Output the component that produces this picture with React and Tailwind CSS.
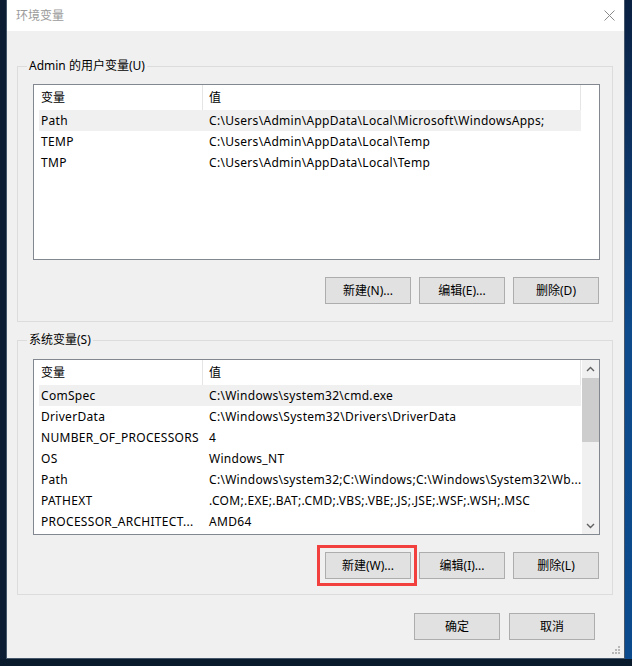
import React from 'react';

const userVars = [
  { name: 'Path', value: 'C:\\Users\\Admin\\AppData\\Local\\Microsoft\\WindowsApps;', selected: true },
  { name: 'TEMP', value: 'C:\\Users\\Admin\\AppData\\Local\\Temp' },
  { name: 'TMP', value: 'C:\\Users\\Admin\\AppData\\Local\\Temp' },
];

const systemVars = [
  { name: 'ComSpec', value: 'C:\\Windows\\system32\\cmd.exe', selected: true },
  { name: 'DriverData', value: 'C:\\Windows\\System32\\Drivers\\DriverData' },
  { name: 'NUMBER_OF_PROCESSORS', value: '4' },
  { name: 'OS', value: 'Windows_NT' },
  { name: 'Path', value: 'C:\\Windows\\system32;C:\\Windows;C:\\Windows\\System32\\Wb...' },
  { name: 'PATHEXT', value: '.COM;.EXE;.BAT;.CMD;.VBS;.VBE;.JS;.JSE;.WSF;.WSH;.MSC' },
  { name: 'PROCESSOR_ARCHITECT...', value: 'AMD64' },
];

function Chevron({ up }) {
  return (
    <svg width="9" height="6" viewBox="0 0 9 6">
      <polyline
        points={up ? '1,5 4.5,1.5 8,5' : '1,1 4.5,4.5 8,1'}
        fill="none"
        stroke="#606060"
        strokeWidth="1.4"
      />
    </svg>
  );
}

function Scrollbar() {
  return (
    <div className="ml-[1px] w-[17px] flex flex-col bg-[#f0f0f0]">
      <div className="h-[17px] flex items-center justify-center">
        <Chevron up />
      </div>
      <div className="h-[64px] mt-[1px] bg-[#cdcdcd]" />
      <div className="flex-1" />
      <div className="h-[17px] flex items-center justify-center">
        <Chevron />
      </div>
    </div>
  );
}

function VarList({ rows, scroll }) {
  return (
    <div className="ml-[15px] w-[567px] h-[176px] border border-[#828790] bg-white flex overflow-hidden">
      <div className="w-[547px] pl-[5px] flex flex-col">
        <div className="h-[25px] flex shrink-0">
          <div className="w-[164px] pl-[2px] flex items-center border-r border-[#e5e5e5]">变量</div>
          <div className="flex-1 pl-[6px] flex items-center border-r border-[#e5e5e5]">值</div>
        </div>
        {rows.map((r) => (
          <div
            key={r.name}
            className={`h-[21px] flex shrink-0 items-center whitespace-nowrap tracking-[0.3px] ${r.selected ? 'bg-[#f0f0f0]' : ''}`}
          >
            <div className="w-[164px] pl-[2px] overflow-hidden">{r.name}</div>
            <div className="flex-1 pl-[6px] overflow-hidden">{r.value}</div>
          </div>
        ))}
      </div>
      {scroll ? <Scrollbar /> : null}
    </div>
  );
}

function Button({ children }) {
  return (
    <div className="w-[86px] h-[27px] bg-[#e1e1e1] border border-[#adadad] flex items-center justify-center">
      {children}
    </div>
  );
}

function App() {
  return (
    <div className="w-[632px] h-[666px] flex flex-col bg-[#0a1a2d] overflow-hidden text-[12px] text-black font-['Noto_Sans','Noto_Sans_CJK_SC',sans-serif]">
      <div className="flex h-[659px]">
        <div className="w-[6px] bg-[#0b1c33]" />
        <div className="w-[619px] flex flex-col border-x border-b border-[#46566a]">
          {/* title bar */}
          <div className="h-[31px] bg-white flex items-center justify-between pl-[9px] pr-[9px]">
            <span className="text-[#9a9a9a]">环境变量</span>
            <svg width="11" height="11" viewBox="0 0 11 11">
              <path d="M0.5 0.5 L10.5 10.5 M10.5 0.5 L0.5 10.5" stroke="#8a8a8a" strokeWidth="1" />
            </svg>
          </div>

          <div className="relative flex-1 bg-[#f0f0f0] flex flex-col">
            <fieldset className="mt-[27px] ml-[10px] w-[596px] border border-[#dcdcdc] p-0 m-0">
              <legend className="ml-[9px] px-[2px] leading-[16px]">Admin 的用户变量(U)</legend>
              <div className="mt-[10px]">
                <VarList rows={userVars} />
              </div>
              <div className="mt-[17px] mb-[17px] mr-[13px] flex justify-end gap-[8px]">
                <Button>新建(N)...</Button>
                <Button>编辑(E)...</Button>
                <Button>删除(D)</Button>
              </div>
            </fieldset>

            <fieldset className="mt-[10px] ml-[10px] w-[596px] border border-[#dcdcdc] p-0 m-0">
              <legend className="ml-[9px] px-[2px] leading-[16px]">系统变量(S)</legend>
              <div className="mt-[11px]">
                <VarList rows={systemVars} scroll />
              </div>
              <div className="mt-[17px] mb-[15px] mr-[13px] flex justify-end gap-[8px]">
                <div className="relative">
                  <Button>新建(W)...</Button>
                  <div className="absolute -top-[7px] -bottom-[7px] -left-[8px] -right-[6px] border-[3px] border-[#f2403f]" />
                </div>
                <Button>编辑(I)...</Button>
                <Button>删除(L)</Button>
              </div>
            </fieldset>

            <div className="mt-[18px] mr-[29px] flex justify-end gap-[9px]">
              <Button>确定</Button>
              <Button>取消</Button>
            </div>

            <svg className="absolute right-[3px] bottom-[3px]" width="10" height="10" viewBox="0 0 10 10">
              <rect x="7" y="1" width="2" height="2" fill="#b8b8b8" />
              <rect x="4" y="4" width="2" height="2" fill="#b8b8b8" />
              <rect x="7" y="4" width="2" height="2" fill="#b8b8b8" />
              <rect x="1" y="7" width="2" height="2" fill="#b8b8b8" />
              <rect x="4" y="7" width="2" height="2" fill="#b8b8b8" />
              <rect x="7" y="7" width="2" height="2" fill="#b8b8b8" />
            </svg>
          </div>
        </div>
        <div className="flex-1 bg-gradient-to-b from-[#0a2142] via-[#0d4b8d] to-[#0b4a8c]" />
      </div>
      <div className="flex-1 bg-[#0a1a2d]" />
    </div>
  );
}

export default App;
